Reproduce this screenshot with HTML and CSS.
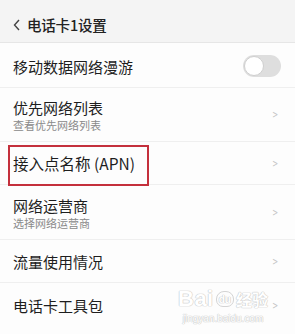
FILE: index.html
```html
<!DOCTYPE html>
<html lang="zh">
<head>
<meta charset="utf-8">
<link rel="stylesheet" href="styles.css">
</head>
<body>
<div class="screen">
  <header class="topbar">
    <svg class="back" width="7" height="12" viewBox="0 0 7 12"><path d="M6 1 L1.5 6 L6 11" fill="none" stroke="#444" stroke-width="1.4"/></svg>
    <span class="title">电话卡1设置</span>
  </header>
  <div class="row r1">
    <span class="label">移动数据网络漫游</span>
    <span class="toggle"><span class="knob"></span></span>
  </div>
  <div class="row r2">
    <div class="texts">
      <span class="label">优先网络列表</span>
      <span class="sub">查看优先网络列表</span>
    </div>
    <span class="chev">&gt;</span>
  </div>
  <div class="row r3">
    <span class="label">接入点名称 (APN)</span>
    <span class="chev">&gt;</span>
    <span class="mark"></span>
  </div>
  <div class="row r4">
    <div class="texts">
      <span class="label">网络运营商</span>
      <span class="sub">选择网络运营商</span>
    </div>
    <span class="chev">&gt;</span>
  </div>
  <div class="row r5">
    <span class="label">流量使用情况</span>
    <span class="chev">&gt;</span>
  </div>
  <div class="row r6">
    <span class="label">电话卡工具包</span>
    <span class="chev">&gt;</span>
  </div>
  <div class="watermark">
    <div class="wm-top"><span class="bai">Bai</span><span class="du">du</span><span class="jy">经验</span></div>
    <div class="wm-url">jingyan.baidu.com</div>
  </div>
</div>
</body>
</html>
```

FILE: styles.css
```css
* { box-sizing: border-box; }
html, body { margin: 0; padding: 0; }
body {
  background: #fdfdfd;
  font-family: "Noto Sans CJK SC", "Noto Sans", sans-serif;
  color: #222;
}
.screen {
  position: relative;
  width: 295px;
  height: 334px;
  overflow: hidden;
  background: #fdfdfd;
}
.topbar {
  height: 43px;
  background: #f4f4f4;
  border-bottom: 1px solid #e6e6e6;
  display: flex;
  align-items: center;
  padding: 7px 0 0 13px;
  gap: 7px;
}
.title {
  font-size: 14.5px;
  font-weight: 500;
  color: #222;
  letter-spacing: -0.2px;
}
.row {
  position: relative;
  display: flex;
  align-items: center;
  justify-content: space-between;
  padding: 0 16px 0 13px;
  border-bottom: 1px solid #efefef;
}
.r1 { height: 45px; padding-top: 2px; padding-right: 14px; }
.r2 { height: 54px; }
.r3 { height: 43px; padding-top: 1px; }
.r4 { height: 55px; }
.r5 { height: 43px; }
.r6 { height: 44px; border-bottom: none; }
.texts { display: flex; flex-direction: column; padding-top: 2px; }
.label { font-size: 15px; line-height: 19px; color: #1e1e1e; }
.r3 .label { font-size: 15.5px; }
.sub { font-size: 11px; line-height: 16px; color: #8a8a8a; }
.chev {
  font-family: "DejaVu Sans", sans-serif;
  font-size: 10px;
  color: #c4c4c4;
  transform: scaleX(0.7);
}
.toggle {
  width: 38px;
  height: 22px;
  border-radius: 11px;
  background: #dedede;
  display: flex;
  align-items: center;
  padding: 1px;
}
.knob {
  width: 20px;
  height: 20px;
  border-radius: 50%;
  background: #fff;
  border: 1px solid #cfcfcf;
}
.mark {
  position: absolute;
  left: 8px;
  top: 3px;
  width: 141px;
  height: 41px;
  border: 2px solid #c4303c;
}
.watermark {
  position: absolute;
  left: 176px;
  top: 284px;
  width: 94px;
  color: #fff;
  text-shadow: 0 0 1px #c8c8c8, 0 0 1px #c8c8c8, 0 0 1px #c8c8c8;
  text-align: center;
}
.wm-top { display: flex; align-items: flex-end; justify-content: center; height: 26px; font-family: "Liberation Sans", sans-serif; }
.bai { font-size: 22px; font-weight: bold; line-height: 22px; letter-spacing: 0.5px; }
.du {
  font-size: 10px; font-weight: bold; line-height: 13px;
  border: 1.5px solid #d4d4d4; border-radius: 8px 8px 7px 7px; padding: 1px 2px 0; margin: 0 2px 3px;
}
.jy { font-family: "Noto Sans CJK SC", sans-serif; font-size: 16px; font-weight: bold; line-height: 22px; }
.wm-url { font-family: "Liberation Sans", sans-serif; font-size: 10px; line-height: 12px; margin-top: 3px; }
```
